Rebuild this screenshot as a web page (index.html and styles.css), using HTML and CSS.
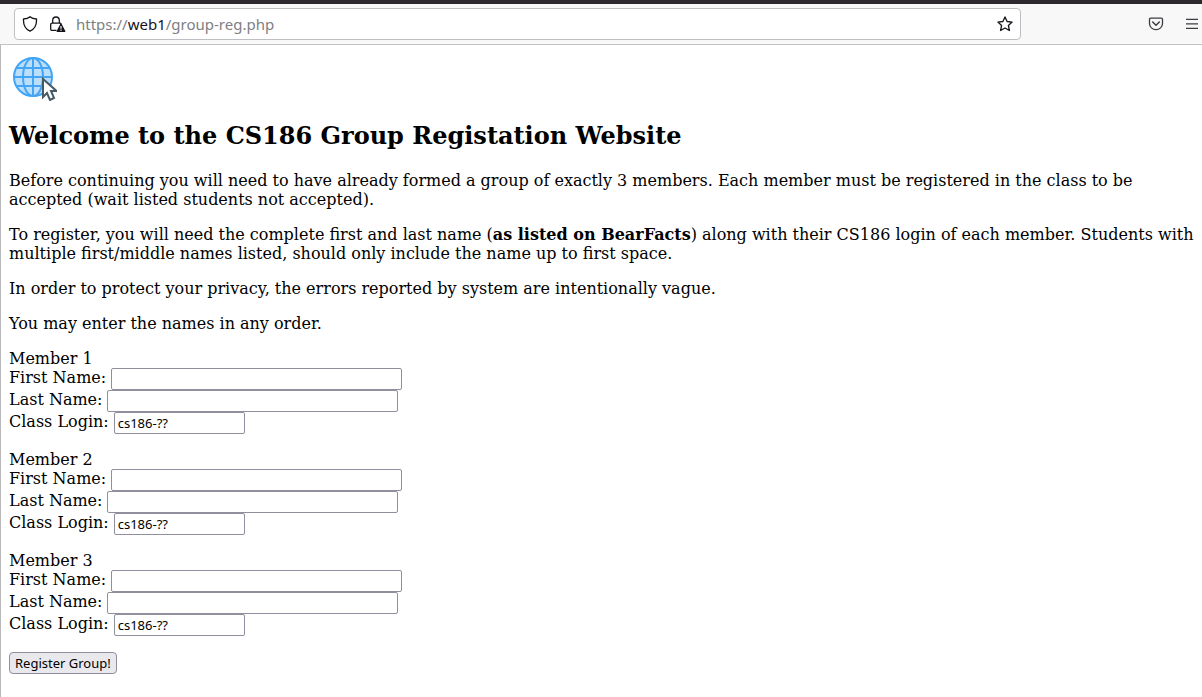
FILE: index.html
```html
<!DOCTYPE html>
<html lang="en">
<head>
<meta charset="utf-8">
<title>CS186 Group Registration</title>
<link rel="stylesheet" href="styles.css">
</head>
<body>
<header class="chrome">
  <div class="address">
    <svg class="icon" viewBox="0 0 16 16" aria-hidden="true"><path d="M8 .8C6.300 2.300 4 2.900 1.500 3c-.3 5 1.300 9.800 6.500 12.200C13.200 12.800 14.800 8 14.500 3 12 2.900 9.700 2.300 8 .8z" fill="none" stroke="#15141a" stroke-width="1.300" stroke-linejoin="round"/></svg>
    <svg class="icon lock" viewBox="0 0 16 16" aria-hidden="true"><path d="M2.700 7V4.300a3.300 3.300 0 0 1 6.600 0V7M6.500 14.400H2A1.300 1.300 0 0 1 .7 13V8.500A1.300 1.300 0 0 1 2 7.200h8.300l1 1" fill="none" stroke="#15141a" stroke-width="1.300"/><path d="M11 7.500a.8.8 0 0 1 .7.400l3.600 7a.7.700 0 0 1-.6 1.100H7.300a.7.700 0 0 1-.6-1.100l3.600-7a.8.8 0 0 1 .7-.4z" fill="#15141a"/><path d="M11 10v2.700M11 13.500v1.200" stroke="#fff" stroke-width="1.200"/></svg>
    <div class="url">https://<span class="host">web1</span>/group-reg.php</div>
    <button class="tool" type="button" aria-label="Bookmark this page"><svg class="icon" viewBox="0 0 16 16" aria-hidden="true"><path d="M8 .9l2.100 4.600 5 .6-3.700 3.400 1 5L8 12l-4.400 2.500 1-5L.9 6.100l5-.6z" fill="none" stroke="#15141a" stroke-width="1.300" stroke-linejoin="round"/></svg></button>
  </div>
  <div class="tools">
    <button class="tool" type="button" aria-label="Save to Pocket"><svg class="icon" viewBox="0 0 16 16" aria-hidden="true"><path d="M2.700 2.200h10.600a1.200 1.200 0 0 1 1.200 1.200V7.500a6.500 6.200 0 0 1-13 0V3.400a1.200 1.200 0 0 1 1.200-1.200z" fill="none" stroke="#3c3b40" stroke-width="1.300"/><path d="M4.700 6L8 9.200 11.300 6" fill="none" stroke="#3c3b40" stroke-width="1.500" stroke-linecap="round" stroke-linejoin="round"/></svg></button>
    <button class="tool" type="button" aria-label="Open application menu"><svg class="icon" viewBox="0 0 16 16" aria-hidden="true"><path d="M2 3.400h12M2 7.900h12M2 12.400h12" stroke="#3c3b40" stroke-width="1.400"/></svg></button>
  </div>
</header>
<main class="page">
  <svg class="logo" viewBox="0 0 48 48" role="img" aria-label="Globe"><circle cx="24" cy="24" r="19" fill="#bbdefb"/><g fill="none" stroke="#42a5f5" stroke-width="2"><circle cx="24" cy="24" r="19"/><ellipse cx="24" cy="24" rx="10" ry="19"/><path d="M24 5v38M5 24h38M8 15h32M8 33h32"/></g><path d="M34 26v18l4-4 3 7 4-2-3-7h5.500z" fill="#fff" stroke="#455a64" stroke-width="2"/></svg>
  <h2 class="title">Welcome to the CS186 Group Registation Website</h2>
  <p class="text">Before continuing you will need to have already formed a group of exactly 3 members. Each member must be registered in the class to be accepted (wait listed students not accepted).</p>
  <p class="text">To register, you will need the complete first and last name (<b>as listed on BearFacts</b>) along with their CS186 login of each member. Students with multiple first/middle names listed, should only include the name up to first space.</p>
  <p class="text">In order to protect your privacy, the errors reported by system are intentionally vague.</p>
  <p class="text">You may enter the names in any order.</p>
  <form class="form">
    <div class="member">
      <div>Member 1</div>
      <div class="row"><label for="first1">First Name:</label><input class="field" id="first1" type="text"></div>
      <div class="row"><label for="last1">Last Name:</label><input class="field" id="last1" type="text"></div>
      <div class="row"><label for="login1">Class Login:</label><input class="field login" id="login1" type="text" value="cs186-??"></div>
    </div>
    <div class="member">
      <div>Member 2</div>
      <div class="row"><label for="first2">First Name:</label><input class="field" id="first2" type="text"></div>
      <div class="row"><label for="last2">Last Name:</label><input class="field" id="last2" type="text"></div>
      <div class="row"><label for="login2">Class Login:</label><input class="field login" id="login2" type="text" value="cs186-??"></div>
    </div>
    <div class="member">
      <div>Member 3</div>
      <div class="row"><label for="first3">First Name:</label><input class="field" id="first3" type="text"></div>
      <div class="row"><label for="last3">Last Name:</label><input class="field" id="last3" type="text"></div>
      <div class="row"><label for="login3">Class Login:</label><input class="field login" id="login3" type="text" value="cs186-??"></div>
    </div>
    <button class="submit" type="button">Register Group!</button>
  </form>
</main>
</body>
</html>
```
FILE: styles.css
```css
* {
  box-sizing: border-box;
}

body {
  margin: 0;
  min-height: 100vh;
  display: flex;
  flex-direction: column;
  background: #fff;
  color: #000;
  font: 16px/19px "DejaVu Serif", serif;
}

.chrome {
  display: flex;
  align-items: center;
  justify-content: space-between;
  padding: 4px 2px 4px 14px;
  border-top: 4px solid #2b292d;
  border-bottom: 1px solid #c2c2c3;
  background: #f8f8f8;
}

.address {
  display: flex;
  align-items: center;
  flex: 0 1 1007px;
  height: 32px;
  padding: 0 7px;
  border: 1px solid #bfbfc3;
  border-radius: 4px;
  background: #fff;
}

.icon {
  display: block;
  flex: none;
  width: 16px;
  height: 16px;
}

.lock {
  margin-left: 12px;
}

.url {
  flex: 1;
  margin-left: 10px;
  color: #808083;
  font: 15px/20px "Noto Sans", sans-serif;
}

.host {
  color: #15141a;
}

.tools {
  display: flex;
  gap: 20px;
}

.tool {
  padding: 0;
  border: 0;
  background: none;
}

.page {
  flex: 1;
  padding: 8px;
  border-left: 1px solid #b8b8ba;
}

.logo {
  display: block;
  width: 48px;
  height: 48px;
}

.title {
  margin: 20px 0 21px;
  font-size: 24px;
  line-height: 29px;
}

.text {
  margin: 0 0 16px;
}

.member {
  margin-bottom: 16px;
}

.row {
  display: flex;
  align-items: flex-start;
  gap: 5px;
}

.field {
  width: 291px;
  height: 22px;
  padding: 0 3px;
  border: 1px solid #8f8f9d;
  border-radius: 2px;
  background: #fff;
  color: #000;
  font: 13px/18px "Noto Sans", sans-serif;
}

.login {
  width: 131px;
}

.submit {
  display: block;
  height: 22px;
  padding: 0 5px;
  border: 1px solid #8f8f9d;
  border-radius: 4px;
  background: #e9e9ed;
  color: #000;
  font: 13px/18px "Noto Sans", sans-serif;
}
```
